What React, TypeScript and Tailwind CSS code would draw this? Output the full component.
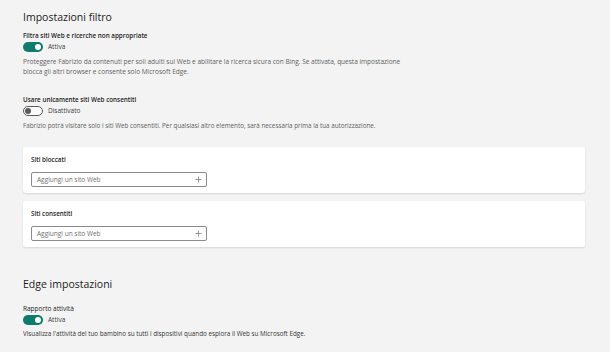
import React from "react";

const font = { fontFamily: '"Open Sans", "Noto Sans", sans-serif' };

function Toggle({ on, label }: { on: boolean; label: string }) {
  return (
    <div className="mt-[1px] flex h-[10px] items-center gap-[5px]">
      {on ? (
        <div className="flex h-[10px] w-[20px] items-center justify-end rounded-full bg-[#0f7b6c] px-[2px]">
          <div className="h-[6px] w-[6px] rounded-full bg-white" />
        </div>
      ) : (
        <div className="flex h-[10px] w-[20px] items-center justify-start rounded-full border border-[#5c5c5c] bg-[#fafafa] px-[1px]">
          <div className="h-[6px] w-[6px] rounded-full bg-[#5c5c5c]" />
        </div>
      )}
      <span className="text-[6.5px] leading-[10px] text-[#3b3b3b]">{label}</span>
    </div>
  );
}

function SiteCard({ title }: { title: string }) {
  return (
    <div className="rounded-[3px] bg-white px-[8px] pt-[8px] pb-[6px] shadow-[0_1px_2px_rgba(0,0,0,0.12)]">
      <div className="text-[6.3px] font-semibold leading-[10px] text-[#1b1b1b]">{title}</div>
      <div className="mt-[7px] flex h-[15px] w-[176px] items-center justify-between rounded-[2px] border border-[#8a8a8a] bg-white pl-[5px] pr-[4px]">
        <span className="text-[6.5px] text-[#707070]">Aggiungi un sito Web</span>
        <svg width="7" height="7" viewBox="0 0 7 7" className="text-[#707070]">
          <path d="M3.5 0.5v6M0.5 3.5h6" stroke="currentColor" strokeWidth="0.7" fill="none" />
        </svg>
      </div>
    </div>
  );
}

export default function App() {
  return (
    <div className="min-h-[352px] w-[610px] bg-[#f3f3f3] pl-[23px] pr-[25px] pt-[10px]" style={font}>
      {/* Filter settings */}
      <h2 className="text-[10.5px] leading-[14px] text-[#1b1b1b]">Impostazioni filtro</h2>

      <div className="mt-[7px] text-[6.3px] font-semibold leading-[10px] text-[#1b1b1b]">
        Filtra siti Web e ricerche non appropriate
      </div>
      <Toggle on label="Attiva" />
      <p className="mt-[5px] text-[6.5px] leading-[10px] text-[#616161]">
        Proteggere Fabrizio da contenuti per soli adulti sul Web e abilitare la ricerca sicura con Bing. Se attivata, questa impostazione
        <br />
        blocca gli altri browser e consente solo Microsoft Edge.
      </p>

      <div className="mt-[18px] text-[6.3px] font-semibold leading-[10px] text-[#1b1b1b]">
        Usare unicamente siti Web consentiti
      </div>
      <Toggle on={false} label="Disattivato" />
      <p className="mt-[5px] text-[6.3px] leading-[10px] text-[#616161]">
        Fabrizio potrà visitare solo i siti Web consentiti. Per qualsiasi altro elemento, sarà necessaria prima la tua autorizzazione.
      </p>

      <div className="mt-[16px] flex flex-col gap-[8px]">
        <SiteCard title="Siti bloccati" />
        <SiteCard title="Siti consentiti" />
      </div>

      {/* Edge settings */}
      <h2 className="mt-[30px] text-[10.5px] leading-[14px] text-[#1b1b1b]">Edge impostazioni</h2>

      <div className="mt-[13px] text-[6.5px] leading-[10px] text-[#1b1b1b]">Rapporto attività</div>
      <Toggle on label="Attiva" />
      <p className="mt-[4px] text-[6.3px] leading-[10px] text-[#333333]">
        Visualizza l'attività del tuo bambino su tutti i dispositivi quando esplora il Web su Microsoft Edge.
      </p>
    </div>
  );
}
